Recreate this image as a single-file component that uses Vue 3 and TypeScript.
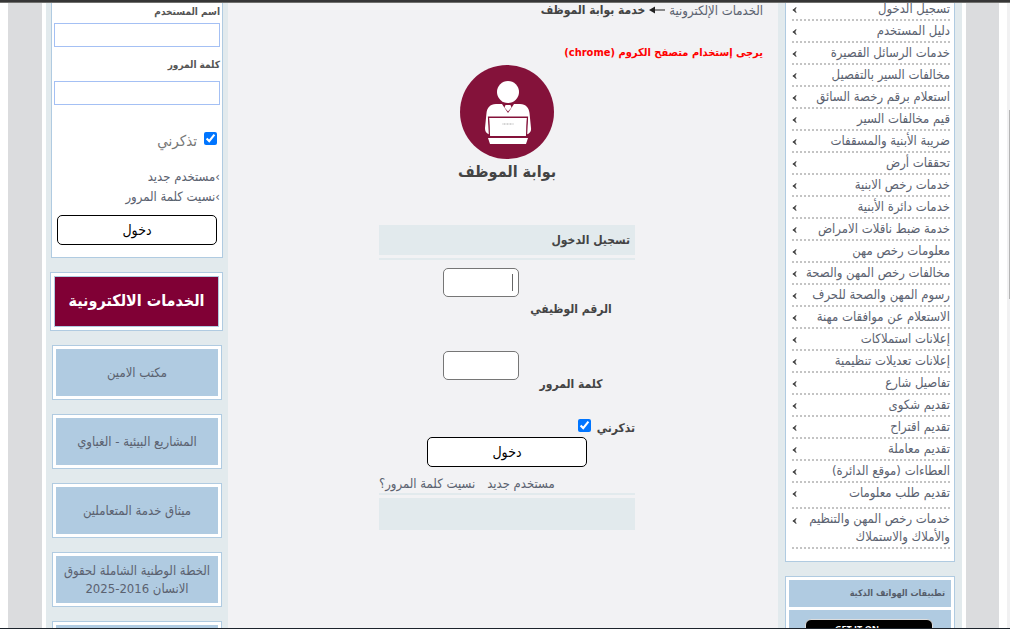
<script setup lang="ts">
import { ref } from 'vue'

const services: string[] = [
  'تسجيل الدخول',
  'دليل المستخدم',
  'خدمات الرسائل القصيرة',
  'مخالفات السير بالتفصيل',
  'استعلام برقم رخصة السائق',
  'قيم مخالفات السير',
  'ضريبة الأبنية والمسقفات',
  'تحققات أرض',
  'خدمات رخص الابنية',
  'خدمات دائرة الأبنية',
  'خدمة ضبط ناقلات الامراض',
  'معلومات رخص مهن',
  'مخالفات رخص المهن والصحة',
  'رسوم المهن والصحة للحرف',
  'الاستعلام عن موافقات مهنة',
  'إعلانات استملاكات',
  'إعلانات تعديلات تنظيمية',
  'تفاصيل شارع',
  'تقديم شكوى',
  'تقديم اقتراح',
  'تقديم معاملة',
  'العطاءات (موقع الدائرة)',
  'تقديم طلب معلومات',
]

const cards: string[][] = [
  ['مكتب الامين'],
  ['المشاريع البيئية - الغباوي'],
  ['ميثاق خدمة المتعاملين'],
  ['الخطة الوطنية الشاملة لحقوق', 'الانسان 2016-2025'],
  [],
]

const sideUser = ref('')
const sidePass = ref('')
const sideRemember = ref(true)
const employee = ref('')
const password = ref('')
const remember = ref(true)
</script>

<template>
  <div class="screen" dir="rtl">
    <div class="topbar"></div>
    <div class="viewport">
      <div class="scroll"><div class="thumb"></div></div>
      <div class="page">
        <div class="gutter start"></div>
        <div class="columns">
          <nav class="services">
            <ul class="menu">
              <li v-for="(s, i) in services" :key="s" :class="{ tall: i === services.length - 1 }">
                <a href="#">{{ s }}</a>
                <svg class="chev" viewBox="0 0 6 7"><path d="M5 .5 1 3.5 5 6.5 3.4 3.5z" /></svg>
              </li>
              <li class="double">
                <a href="#">خدمات رخص المهن والتنظيم<br />والأملاك والاستملاك</a>
                <svg class="chev" viewBox="0 0 6 7"><path d="M5 .5 1 3.5 5 6.5 3.4 3.5z" /></svg>
              </li>
            </ul>
            <section class="apps">
              <h2>تطبيقات الهواتف الذكية</h2>
              <div class="apps-body"><a href="#" class="store" dir="ltr">GET IT ON</a></div>
            </section>
          </nav>

          <main class="content">
            <div class="crumbs">
              <a href="#">الخدمات الإلكترونية</a>
              <svg class="arrow" viewBox="0 0 16 8"><path d="M0 4 6 .5v7z" /><path d="M5 3.5h11v1H5z" /></svg>
              <b>خدمة بوابة الموظف</b>
            </div>
            <p class="notice">يرجى إستخدام متصفح الكروم (chrome)</p>
            <svg class="emblem" viewBox="0 0 94 94">
              <circle cx="47" cy="47" r="47" fill="#84123a" />
              <g fill="#fff">
                <circle cx="48" cy="27" r="11" />
                <path d="M42 39h-6c-6 0-9 4-9.500 9L25 63c0 4 2 6 5 6.500L28 52h40l-2 17.500c3-.5 5.500-2.500 5-6.500l-1.500-15c-.5-5-3.500-9-9.500-9h-6l-6 9z" />
                <path d="M45.500 40h5l1 2.500-3.500 4-3.500-4z" />
                <path d="M29 53h38l-1 18H30z" />
                <path d="M28 73h40l-2 6H30z" />
              </g>
              <path d="M28.500 52h39l-1 19.500h-37z" fill="none" stroke="#84123a" stroke-width="1.200" />
              <path d="M42.500 59h11" stroke="#aaa" stroke-dasharray="1 .5" />
            </svg>
            <h1>بوابة الموظف</h1>

            <form class="panel" @submit.prevent>
              <h2>تسجيل الدخول</h2>
              <div class="panel-body">
                <div class="field">
                  <label for="emp">الرقم الوظيفي</label>
                  <div class="box">
                    <input id="emp" v-model="employee" type="text" />
                    <span class="caret"></span>
                  </div>
                </div>
                <div class="field second">
                  <label for="pwd">كلمة المرور</label>
                  <div class="box"><input id="pwd" v-model="password" type="password" /></div>
                </div>
                <div class="remember">
                  <label for="rem">تذكرني</label>
                  <input id="rem" v-model="remember" type="checkbox" />
                </div>
                <button type="submit" class="enter">دخول</button>
                <div class="links">
                  <a href="#">مستخدم جديد</a>
                  <a href="#">نسيت كلمة المرور؟</a>
                </div>
              </div>
              <div class="panel-foot"></div>
            </form>
          </main>

          <aside class="side">
            <form class="login" @submit.prevent>
              <label class="cap" for="su">اسم المستخدم</label>
              <input id="su" v-model="sideUser" class="line" type="text" />
              <label class="cap next" for="sp">كلمة المرور</label>
              <input id="sp" v-model="sidePass" class="line" type="password" />
              <div class="side-remember">
                <input id="sr" v-model="sideRemember" type="checkbox" />
                <label for="sr">تذكرني</label>
              </div>
              <a href="#" class="side-link">›مستخدم جديد</a>
              <a href="#" class="side-link">›نسيت كلمة المرور</a>
              <button type="submit" class="enter">دخول</button>
            </form>
            <a href="#" class="banner"><span>الخدمات الالكترونية</span></a>
            <a v-for="(c, i) in cards" :key="i" href="#" class="card">
              <span class="card-in"><span v-for="l in c" :key="l">{{ l }}</span></span>
            </a>
          </aside>
        </div>
        <div class="gutter"></div>
      </div>
    </div>
    <div class="bottombar"></div>
  </div>
</template>

<style>
body {
  margin: 0;
  background: #fff;
}
</style>

<style scoped>
* {
  box-sizing: border-box;
}
.screen {
  height: 100vh;
  display: flex;
  flex-direction: column;
  overflow: hidden;
  font-family: 'DejaVu Sans Condensed', 'DejaVu Sans', sans-serif;
  font-size: 13px;
  color: #444;
}
a {
  color: #5b6270;
  text-decoration: none;
}
h1,
h2,
p,
ul {
  margin: 0;
  padding: 0;
}
input {
  margin: 0;
}
.topbar {
  flex: none;
  height: 3px;
  background: #363636;
  border-bottom: 1px solid #70706e;
}
.bottombar {
  flex: none;
  height: 1px;
  background: #1d242c;
}
.viewport {
  flex: 1;
  min-height: 0;
  display: flex;
  overflow: hidden;
}
.scroll {
  width: 3px;
  background: #f1f1f2;
  padding-top: 107px;
}
.thumb {
  width: 1px;
  height: 189px;
  background: #b5b5b5;
}
.page {
  flex: 1;
  display: flex;
  padding: 0 8px;
  background: #fff;
}
.gutter {
  flex: 0 0 34px;
  background: #dbdcde;
}
.gutter.start {
  flex-basis: 33px;
}
.columns {
  flex: 1;
  display: flex;
  margin: -4px 4px 0;
  min-width: 0;
}
.services {
  flex: 0 0 184px;
  padding: 0 7px;
  background: #e2eaed;
}
.menu {
  list-style: none;
  background: #fff;
  border: 1px solid #b0cbe1;
  border-top: 0;
  padding: 0 4px 12px 6px;
}
.menu li {
  display: flex;
  justify-content: space-between;
  height: 22px;
  border-bottom: 2px dotted #c4c4c4;
  line-height: 20px;
  white-space: nowrap;
}
.menu li.tall {
  height: 26px;
}
.menu li.double {
  height: 40px;
  padding-top: 1px;
  line-height: 18px;
}
.chev {
  flex: none;
  width: 5px;
  height: 6px;
  margin-top: 8px;
  fill: #444;
  stroke: #444;
  stroke-width: 1;
}
.apps {
  margin-top: 14px;
  padding: 3px;
  background: #fff;
  border: 1px solid #b0cbe1;
}
.apps h2 {
  height: 27px;
  padding: 0 6px;
  background: #b0cbe1;
  color: #555c69;
  font-size: 9px;
  line-height: 27px;
}
.apps-body {
  margin-top: 3px;
  padding: 9px 18px 9px 16px;
  background: #b0cbe1;
}
.store {
  display: block;
  height: 40px;
  padding: 3px 29px;
  border: 1px solid #ddd;
  border-radius: 6px;
  background: #000;
  color: #fff;
  font: bold 9px/12px 'Open Sans', sans-serif;
}
.content {
  flex: 1;
  padding: 0 15px 0 23px;
  background: #f2f2f4;
  display: flex;
  flex-direction: column;
  align-items: center;
}
.crumbs {
  align-self: stretch;
  display: flex;
  align-items: center;
  gap: 4px;
  height: 22px;
}
.crumbs b {
  font-size: 12px;
}
.arrow {
  width: 16px;
  height: 8px;
  fill: #222;
}
.notice {
  align-self: stretch;
  margin-top: 22px;
  color: #f00;
  font-size: 11px;
  font-weight: bold;
  line-height: 20px;
}
.emblem {
  width: 94px;
  height: 94px;
  margin-top: 2px;
}
h1 {
  font-size: 16px;
  line-height: 26px;
}
.panel {
  width: 256px;
  margin-top: 40px;
}
.panel h2 {
  height: 30px;
  padding: 0 5px;
  background: #e2eaed;
  font-size: 12px;
  line-height: 30px;
}
.panel-body {
  margin: 3px 0;
  padding-top: 8px;
  border-top: 2px solid #e2eaed;
  border-bottom: 2px solid #e2eaed;
}
.panel-foot {
  height: 32px;
  background: #e2eaed;
}
.field {
  display: flex;
  align-items: flex-start;
  height: 51px;
}
.field label {
  width: 128px;
  align-self: flex-end;
  text-align: center;
  font-size: 12px;
  font-weight: bold;
  line-height: 20px;
}
.second {
  height: 43px;
  margin-top: 32px;
}
.box {
  position: relative;
  width: 76px;
  margin-right: -12px;
}
.box input {
  display: block;
  width: 100%;
  height: 29px;
  padding: 0 6px;
  border: 1px solid #767676;
  border-radius: 5px;
  background: #fff;
}
.caret {
  position: absolute;
  top: 6px;
  right: 6px;
  width: 1px;
  height: 17px;
  background: #666;
}
.remember {
  display: flex;
  gap: 6px;
  height: 18px;
  margin-top: 25px;
  font-size: 12px;
  font-weight: bold;
  line-height: 18px;
}
input[type='checkbox'] {
  width: 13px;
  height: 13px;
  accent-color: #0075ff;
}
.enter {
  display: block;
  width: 160px;
  height: 30px;
  margin: 0 auto;
  padding: 0;
  border: 1px solid #000;
  border-radius: 5px;
  background: #fff;
  color: #000;
  font-family: inherit;
  font-size: 14px;
}
.links {
  display: flex;
  justify-content: flex-end;
  gap: 12px;
  height: 26px;
  padding-top: 8px;
  line-height: 18px;
  white-space: nowrap;
}
.side {
  flex: 0 0 182px;
  padding: 0 6px 0 5px;
  background: #e2eaed;
}
.login {
  margin-right: -1px;
  padding: 4px 2px 12px;
  background: #fff;
  border: 1px solid #b0cbe1;
  border-top: 0;
}
.cap {
  display: block;
  height: 20px;
  font-size: 10px;
  font-weight: bold;
  line-height: 18px;
  color: #555;
}
.cap.next {
  height: 26px;
  margin-top: 8px;
  line-height: 20px;
}
.line {
  display: block;
  width: 100%;
  height: 24px;
  border: 1px solid #a4c0f4;
  background: #fff;
}
.side-remember {
  display: flex;
  gap: 7px;
  margin: 27px 3px 17px;
  height: 18px;
  color: #777;
  font-size: 15px;
  line-height: 18px;
}
.side-link {
  display: block;
  line-height: 20px;
}
.login .enter {
  margin-top: 8px;
}
.banner {
  display: block;
  margin: 14px -1px 0;
  padding: 3px;
  border: 1px solid #b0cbe1;
  background: #fff;
}
.banner span {
  display: block;
  height: 51px;
  border: 1px solid #b0cbe1;
  background: #800035;
  color: #fff;
  font-size: 16px;
  font-weight: bold;
  line-height: 47px;
  text-align: center;
  white-space: nowrap;
}
.card {
  display: block;
  margin: 14px 0 0 1px;
  padding: 3px;
  border: 1px solid #b0cbe1;
  background: #fff;
}
.card-in {
  display: flex;
  flex-direction: column;
  justify-content: center;
  height: 47px;
  background: #b0cbe1;
  line-height: 18px;
  text-align: center;
  white-space: nowrap;
}
</style>
